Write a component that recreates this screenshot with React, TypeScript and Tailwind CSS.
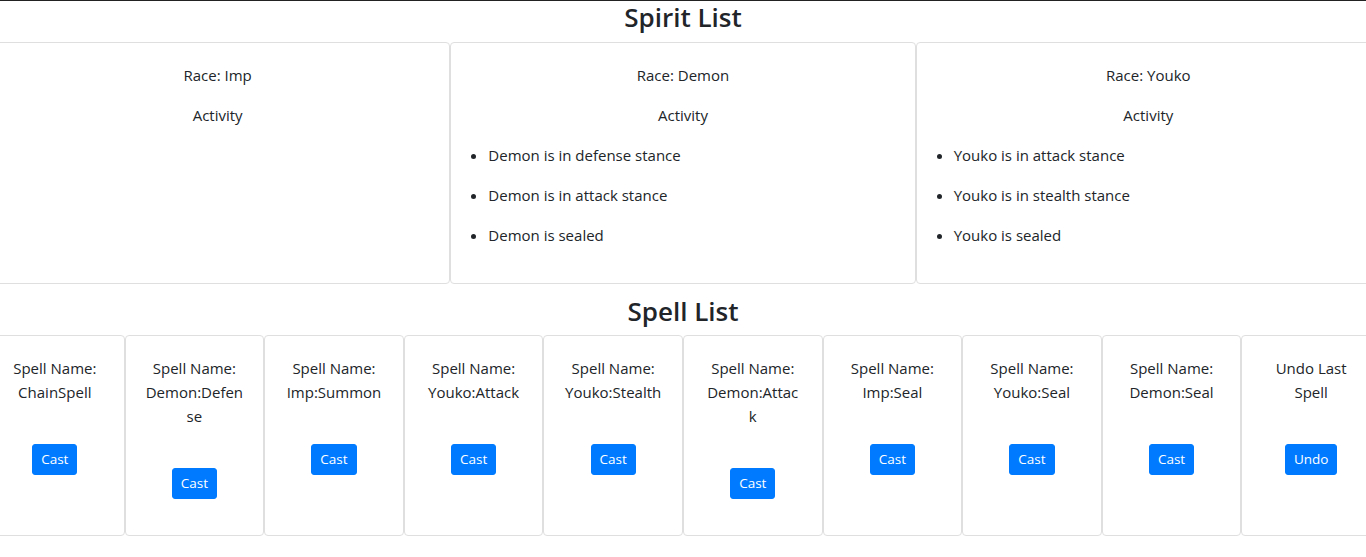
import React from "react";

const spirits = [
  { race: "Imp", activity: [] as string[] },
  {
    race: "Demon",
    activity: ["Demon is in defense stance", "Demon is in attack stance", "Demon is sealed"],
  },
  {
    race: "Youko",
    activity: ["Youko is in attack stance", "Youko is in stealth stance", "Youko is sealed"],
  },
];

const spells: { lines: string[]; btn: string }[] = [
  { lines: ["Spell Name:", "ChainSpell"], btn: "Cast" },
  { lines: ["Spell Name:", "Demon:Defen", "se"], btn: "Cast" },
  { lines: ["Spell Name:", "Imp:Summon"], btn: "Cast" },
  { lines: ["Spell Name:", "Youko:Attack"], btn: "Cast" },
  { lines: ["Spell Name:", "Youko:Stealth"], btn: "Cast" },
  { lines: ["Spell Name:", "Demon:Attac", "k"], btn: "Cast" },
  { lines: ["Spell Name:", "Imp:Seal"], btn: "Cast" },
  { lines: ["Spell Name:", "Youko:Seal"], btn: "Cast" },
  { lines: ["Spell Name:", "Demon:Seal"], btn: "Cast" },
  { lines: ["Undo Last", "Spell"], btn: "Undo" },
];

export default function App() {
  return (
    <div className="min-h-screen overflow-hidden border-t border-[#222222] bg-white text-[#212529] font-['Open_Sans','Noto_Sans',sans-serif] text-[15px] leading-6">
      <h3 className="mb-2 text-center text-[26px] font-semibold leading-[32.6px]">Spirit List</h3>
      <div className="-mx-[15px] flex">
        {spirits.map((s) => (
          <div
            key={s.race}
            className="min-w-0 flex-1 rounded-[4px] border border-[#dfdfdf] bg-white"
          >
            <div className="p-5 text-center">
              <p className="mb-4">Race: {s.race}</p>
              <p className="mb-4">Activity</p>
              {s.activity.length > 0 && (
                <ul className="mb-4 list-disc pl-[17px] text-left">
                  {s.activity.map((a) => (
                    <li key={a}>
                      <p className="mb-4">{a}</p>
                    </li>
                  ))}
                </ul>
              )}
            </div>
          </div>
        ))}
      </div>
      <h3 className="mb-2 mt-[11px] text-center text-[26px] font-semibold leading-[32.6px]">Spell List</h3>
      <div className="-mx-[15px] flex">
        {spells.map((sp, i) => (
          <div
            key={i}
            className="min-w-0 flex-1 rounded-[4px] border border-[#dfdfdf] bg-white"
          >
            <div className="p-5 text-center">
              <p className="mb-4">
                {sp.lines.map((l, j) => (
                  <span key={j} className="block whitespace-nowrap">
                    {l}
                  </span>
                ))}
              </p>
              <div className="h-6" />
              <div className="mb-4 flex justify-center">
                <button
                  type="button"
                  className="rounded-[3px] border border-[#007bff] bg-[#007bff] px-2 py-1 text-[13.5px] leading-[21px] text-white"
                >
                  {sp.btn}
                </button>
              </div>
            </div>
          </div>
        ))}
      </div>
    </div>
  );
}
